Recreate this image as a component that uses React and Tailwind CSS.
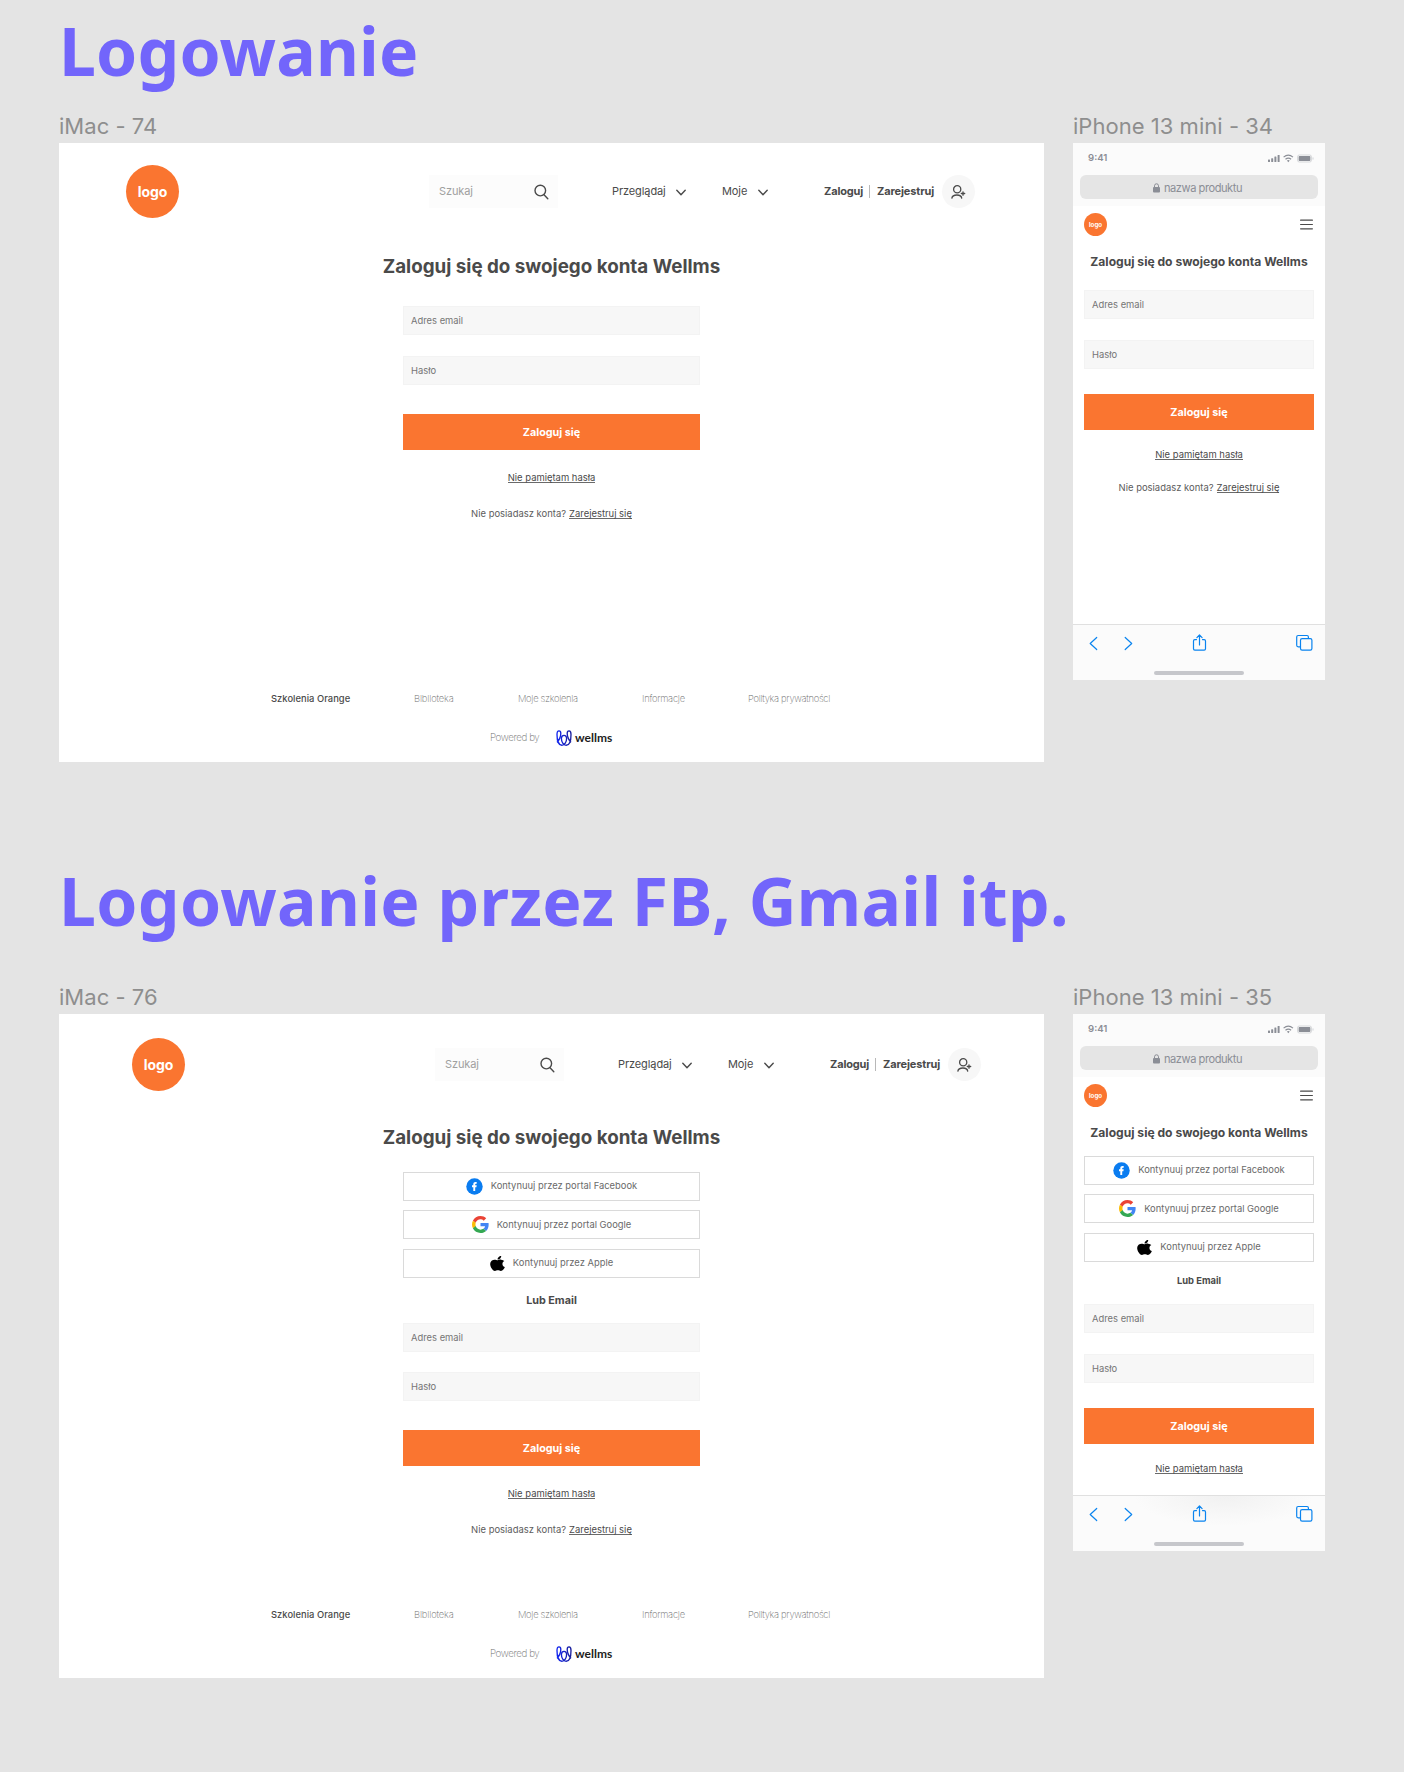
import React from "react";

const inter = "font-['Inter',sans-serif]";

function SearchIcon() {
  return (
    <svg width="15" height="16" viewBox="0 0 15 16" fill="none" stroke="#4a4a4a" strokeWidth="1.4" strokeLinecap="round">
      <circle cx="6.3" cy="6.6" r="5.3" />
      <path d="M10 10.7 L13.8 14.8" />
    </svg>
  );
}

function Chevron() {
  return (
    <svg width="11" height="7" viewBox="0 0 11 7" fill="none" stroke="#4a4a4a" strokeWidth="1.4" strokeLinecap="round" strokeLinejoin="round" className="relative top-px">
      <path d="M.8 1.2 L5 5.7 L9.2 1.2" />
    </svg>
  );
}

function UserPlus() {
  return (
    <svg width="15" height="14" viewBox="0 0 15 14" fill="none" stroke="#4a4a4a" strokeWidth="1.3" strokeLinecap="round">
      <circle cx="6.2" cy="4.3" r="3.6" />
      <path d="M.9 13.2 C1.2 11 2.9 10 5.9 10 C8.9 10 10.4 11 10.7 13.2" />
      <path d="M12 6.8 V10.2 M10.3 8.5 H13.7" />
    </svg>
  );
}

function WellmsMark() {
  return (
    <svg width="16" height="16" viewBox="0 0 16 16" fill="none" strokeWidth="1.35">
      <defs>
        <linearGradient id="wellms" x1="0" x2="1" y1="0" y2="0">
          <stop offset="0" stopColor="#1226f0" />
          <stop offset="1" stopColor="#1a1f9c" />
        </linearGradient>
      </defs>
      <path
        stroke="url(#wellms)"
        d="M0.9 12.2 C2.8 11 4.8 6.8 4.8 3.4 C4.8 1.6 4.1 0.8 3 0.8 C1.6 0.8 1 2.2 1 4.4 C1 9.6 2.4 15.2 5.8 15.2 C8.6 15.2 10.6 12 10.6 8.6 C10.6 6.6 9.6 5.4 8 5.4 C6.4 5.4 5.4 6.6 5.4 8.6 C5.4 12 7.4 15.2 10.2 15.2 C13.6 15.2 15 9.6 15 4.4 C15 2.2 14.4 0.8 13 0.8 C11.9 0.8 11.2 1.6 11.2 3.4 C11.2 6.8 13.2 11 15.1 12.2"
      />
    </svg>
  );
}

function FacebookIcon() {
  return (
    <svg width="17" height="17" viewBox="0 0 17 17">
      <circle cx="8.5" cy="8.5" r="8.2" fill="#0a7cf0" />
      <path d="M7.3 13 V9.2 H6 V7.3 H7.3 V6.2 C7.3 4.6 8.1 3.9 9.5 3.9 C10.1 3.9 10.5 4 10.7 4 V5.7 H10 C9.4 5.7 9.2 6 9.2 6.5 V7.3 H10.7 L10.4 9.2 H9.2 V13 Z" fill="#fff" />
    </svg>
  );
}

function GoogleIcon() {
  return (
    <svg width="17" height="17" viewBox="0 0 48 48">
      <path fill="#ea4335" d="M24 9.5c3.54 0 6.71 1.22 9.21 3.6l6.85-6.85C35.9 2.38 30.47 0 24 0 14.62 0 6.51 5.38 2.56 13.22l7.98 6.19C12.43 13.72 17.74 9.5 24 9.5z" />
      <path fill="#4285f4" d="M46.98 24.55c0-1.57-.15-3.09-.38-4.55H24v9.02h12.94c-.58 2.96-2.26 5.48-4.78 7.18l7.73 6c4.51-4.18 7.09-10.36 7.09-17.65z" />
      <path fill="#fbbc05" d="M10.53 28.59c-.48-1.45-.76-2.99-.76-4.59s.27-3.14.76-4.59l-7.98-6.19C.92 16.46 0 20.12 0 24c0 3.88.92 7.54 2.56 10.78l7.97-6.19z" />
      <path fill="#34a853" d="M24 48c6.48 0 11.93-2.13 15.89-5.81l-7.73-6c-2.15 1.45-4.92 2.3-8.16 2.3-6.26 0-11.57-4.22-13.47-9.91l-7.98 6.19C6.51 42.62 14.62 48 24 48z" />
    </svg>
  );
}

function AppleIcon() {
  return (
    <svg width="15" height="17" viewBox="0 0 384 512" preserveAspectRatio="none" fill="#000">
      <path d="M318.7 268.7c-.2-36.7 16.4-64.4 50-84.8-18.8-26.9-47.2-41.7-84.7-44.6-35.5-2.8-74.3 20.7-88.5 20.7-15 0-49.4-19.7-76.4-19.7C63.3 141.2 4 184.8 4 273.5q0 39.3 14.4 81.2c12.8 36.7 59 126.7 107.2 125.2 25.2-.6 43-17.9 75.8-17.9 31.8 0 48.3 17.9 76.4 17.9 48.6-.7 90.4-82.5 102.6-119.3-65.2-30.7-61.7-90-61.7-91.9zm-56.6-164.2c27.3-32.4 24.8-61.9 24-72.5-24.1 1.4-52 16.4-67.9 34.9-17.5 19.8-27.8 44.3-25.6 71.9 26.1 2 49.9-11.4 69.5-34.3z" />
    </svg>
  );
}

function DesktopHeader({ className }) {
  return (
    <header className={`flex h-[53px] items-center text-[#4a4a4a] ${className}`}>
      <div className="flex size-[53px] shrink-0 items-center justify-center rounded-full bg-[#fa7530] text-[14px] font-bold tracking-[-0.1px] text-white">logo</div>
      <div className="ml-[250px] flex h-[33px] w-[129px] shrink-0 items-center justify-between bg-[#fcfcfc] pr-[9px] pl-[10px] text-[11px] tracking-[-0.1px] text-[#a0a0a0]">
        Szukaj
        <SearchIcon />
      </div>
      <div className="ml-[54px] flex w-[110px] shrink-0 items-center justify-between pr-[35px] text-[11px] whitespace-nowrap">
        <span className="w-[64px] shrink-0 tracking-[-0.1px]">Przeglądaj</span>
        <Chevron />
      </div>
      <div className="flex w-[102px] shrink-0 items-center text-[11px]">
        <span className="w-[36px] shrink-0 tracking-[-0.1px]">Moje</span>
        <Chevron />
      </div>
      <div className="flex items-center text-[11px] font-bold whitespace-nowrap">
        <span className="w-[45px] shrink-0 tracking-[-0.15px]">Zaloguj</span>
        <span className="h-[13px] w-px shrink-0 bg-[#b8b8b8]" />
        <span className="ml-[7px] w-[65px] shrink-0 tracking-[-0.12px]">Zarejestruj</span>
      </div>
      <div className="flex size-[33px] shrink-0 items-center justify-center rounded-full bg-[#f7f7f7]">
        <UserPlus />
      </div>
    </header>
  );
}

function Field({ label, className }) {
  return (
    <div className={`flex h-[29px] w-full items-center border border-[#f3f3f3] bg-[#f7f7f7] pt-[2px] pl-[7px] text-[9.4px] text-[#757575] ${className}`}>{label}</div>
  );
}

function Submit({ className }) {
  return (
    <button className={`flex h-[36px] w-full items-center justify-center bg-[#fa7530] pt-[2px] text-[10.8px] font-bold text-white ${className}`}>Zaloguj się</button>
  );
}

function Social({ icon, label, className }) {
  return (
    <button className={`flex h-[29px] w-full items-center justify-center gap-[8px] border border-[#dadada] bg-white text-[9.4px] text-[#6a6a6a] ${className}`}>
      {icon}
      <span>{label}</span>
    </button>
  );
}

function Socials({ className }) {
  return (
    <div className={`flex w-full flex-col gap-[9.4px] ${className}`}>
      <Social icon={<FacebookIcon />} label="Kontynuuj przez portal Facebook" />
      <Social icon={<GoogleIcon />} label="Kontynuuj przez portal Google" />
      <Social icon={<AppleIcon />} label="Kontynuuj przez Apple" />
    </div>
  );
}

const linkStyle = "inline-block h-[11px] border-b border-[#6a6a6a] leading-[12px] text-[#4a4a4a]";

function Forgot({ className }) {
  return (
    <div className={`flex h-[12px] justify-center text-[9.45px] ${className}`}>
      <a className={linkStyle}>Nie pamiętam hasła</a>
    </div>
  );
}

function Register({ className }) {
  return (
    <div className={`flex h-[12px] justify-center gap-[3px] text-[9.45px] leading-[12px] text-[#5c5c5c] ${className}`}>
      <span>Nie posiadasz konta?</span>
      <a className={linkStyle}>Zarejestruj się</a>
    </div>
  );
}

function DesktopFooter({ className }) {
  return (
    <footer className={`text-[#6e6e6e] ${className}`}>
      <nav className="flex h-[14px] items-center pl-[212px] text-[9.4px] font-extralight tracking-[-0.3px] whitespace-nowrap">
        <span className="w-[143px] font-medium tracking-[0.03px] text-[#4a4a4a]">Szkolenia Orange</span>
        <span className="w-[104px] tracking-[-0.15px]">Biblioteka</span>
        <span className="w-[124px]">Moje szkolenia</span>
        <span className="w-[106px] tracking-[-0.25px]">Informacje</span>
        <span>Polityka prywatności</span>
      </nav>
      <div className="mt-[24px] flex h-[16px] items-center pl-[431px] text-[9.8px] font-extralight tracking-[-0.4px]">
        <span className="w-[66px] pt-px">Powered by</span>
        <WellmsMark />
        <span className="ml-[3px] font-['Lato',sans-serif] text-[12px] font-bold tracking-[0px] text-[#1d1d1d]">wellms</span>
      </div>
    </footer>
  );
}

function PhoneTop() {
  return (
    <>
      <div className="h-[63px] bg-[#fbfbfb] px-[7px] pt-[8px]">
        <div className="flex h-[14px] items-center justify-between pr-[4px] pl-[8px]">
          <span className="text-[9.6px] font-semibold text-[#8b8e96]">9:41</span>
          <svg width="46" height="9" viewBox="0 0 46 9" fill="#8b8e96">
            <rect x="0" y="5.4" width="2" height="2.6" rx=".5" />
            <rect x="3.2" y="4.2" width="2" height="3.8" rx=".5" />
            <rect x="6.4" y="2.6" width="2" height="5.4" rx=".5" />
            <rect x="9.6" y="1" width="2" height="7" rx=".5" />
            <g fill="none" stroke="#8b8e96" strokeWidth="1.2">
              <path d="M15.6 3.1 Q20.3 -0.7 25 3.1" />
              <path d="M17.5 5.2 Q20.3 2.9 23.1 5.2" />
            </g>
            <path d="M18.9 6.6 Q20.3 5.5 21.7 6.6 L20.3 8.2 Z" />
            <rect x="29.5" y="1" width="14" height="7" rx="1.8" fill="none" stroke="#c9cbcf" strokeWidth=".7" />
            <rect x="30.6" y="2" width="11.8" height="5" rx=".8" />
            <rect x="44.6" y="3.4" width=".8" height="2.2" fill="#c9cbcf" />
          </svg>
        </div>
        <div className="mt-[10px] flex h-[24px] items-center justify-center gap-[4px] rounded-[6px] bg-[#e5e5e5] pt-[3px] pr-[3px] text-[11.1px] tracking-[-0.45px] text-[#8b8e96]">
          <svg width="7" height="10" viewBox="0 0 7 10" className="relative -top-px">
            <rect x="0" y="4" width="7" height="5.5" rx="1" fill="#8b8e96" />
            <path d="M1.5 4.5 V2.8 Q1.5 .8 3.5 .8 Q5.5 .8 5.5 2.8 V4.5" fill="none" stroke="#8b8e96" strokeWidth="1" />
          </svg>
          <span>nazwa produktu</span>
        </div>
      </div>
      <div className="mt-[7px] flex h-[23px] items-center justify-between pr-[12px] pl-[11px]">
        <div className="flex size-[23px] items-center justify-center rounded-full bg-[#fa7530] text-[6.2px] font-bold text-white">logo</div>
        <svg width="13" height="11" viewBox="0 0 13 11" stroke="#4a4a4a" strokeWidth="1.2" strokeLinecap="round">
          <path d="M.6 1.2 H12.4 M.6 5.5 H12.4 M.6 9.8 H12.4" />
        </svg>
      </div>
      <h2 className="mt-[17px] h-[18px] text-center text-[12.1px] leading-[18px] font-bold whitespace-nowrap text-[#4a4a4a]">Zaloguj się do swojego konta Wellms</h2>
    </>
  );
}

function PhoneToolbar({ tinted }) {
  return (
    <div className={`mt-auto flex h-[56px] flex-col border-t border-[#e0e0e0] bg-[#fbfbfb] ${tinted ? "bg-[radial-gradient(ellipse_90px_30px_at_60%_0,#f1f1f1,#fbfbfb)]" : ""}`}>
      <svg width="252" height="38" viewBox="0 0 252 38" fill="none" stroke="#0a84ef" strokeWidth="1.2" strokeLinecap="round" strokeLinejoin="round">
        <path d="M23.7 12.5 L17.2 18.5 L23.7 24.5" />
        <path d="M52.2 12.5 L58.7 18.5 L52.2 24.5" />
        <path d="M123.5 14.6 H121.8 Q120.5 14.6 120.5 15.9 V23.8 Q120.5 25.1 121.8 25.1 H131.2 Q132.5 25.1 132.5 23.8 V15.9 Q132.5 14.6 131.2 14.6 H129.5 M126.5 20 V10.3 M123.9 12.6 L126.5 10 L129.1 12.6" />
        <rect x="227.5" y="13.6" width="11.4" height="11.6" rx="1.6" />
        <path d="M227.3 21.8 H225.2 Q223.7 21.8 223.7 20.3 V12 Q223.7 10.5 225.2 10.5 H234 Q235.4 10.5 235.4 12 V13.4" />
      </svg>
      <div className="mt-[8px] ml-[81px] h-[4px] w-[90px] rounded-full bg-[#c6c7cb]" />
    </div>
  );
}

function FrameLabel({ children, className }) {
  return <div className={`h-[27px] text-[22px] leading-[27px] tracking-[0.03px] whitespace-nowrap text-[#8e8e8e] ${className}`}>{children}</div>;
}

export default function App() {
  return (
    <main className={`h-[1772px] w-[1404px] overflow-hidden bg-[#e4e4e4] pl-[59px] ${inter}`}>
      <section className="h-[871px] pt-[6px]">
        <h1 className="h-[92px] font-['Noto_Sans',sans-serif] text-[66px] leading-[88px] font-bold tracking-[0.2px] whitespace-nowrap text-[#7265fb]">Logowanie</h1>
        <div className="mt-[15px] flex gap-[29px]">
          <div>
            <FrameLabel>iMac - 74</FrameLabel>
            <div className="mt-[3px] flex h-[619px] w-[985px] flex-col bg-white">
              <DesktopHeader className="mt-[22px] ml-[67px]" />
              <h2 className="mt-[35px] h-[28px] text-center text-[18.8px] leading-[28px] font-bold text-[#4a4a4a]">Zaloguj się do swojego konta Wellms</h2>
              <div className="mx-auto mt-[25px] w-[297px]">
                <Field label="Adres email" />
                <Field label="Hasło" className="mt-[21px]" />
                <Submit className="mt-[29px]" />
                <Forgot className="mt-[22px]" />
                <Register className="mt-[24px]" />
              </div>
              <DesktopFooter className="mt-[172px]" />
            </div>
          </div>
          <div>
            <FrameLabel>iPhone 13 mini - 34</FrameLabel>
            <div className="mt-[3px] flex h-[537px] w-[252px] flex-col bg-white">
              <PhoneTop />
              <div className="mx-[11px] mt-[19px]">
                <Field label="Adres email" />
                <Field label="Hasło" className="mt-[21px]" />
                <Submit className="mt-[25px]" />
                <Forgot className="mt-[19px]" />
                <Register className="mt-[21px]" />
              </div>
              <PhoneToolbar />
            </div>
          </div>
        </div>
      </section>
      <section>
        <h1 className="mt-[-15px] h-[92px] font-['Noto_Sans',sans-serif] text-[66px] leading-[88px] font-bold tracking-[0.35px] whitespace-nowrap text-[#7265fb]">Logowanie przez FB, Gmail itp.</h1>
        <div className="mt-[36px] flex gap-[29px]">
          <div>
            <FrameLabel>iMac - 76</FrameLabel>
            <div className="mt-[3px] flex h-[664px] w-[985px] flex-col bg-white">
              <DesktopHeader className="mt-[24px] ml-[73px]" />
              <h2 className="mt-[33px] h-[28px] text-center text-[18.8px] leading-[28px] font-bold text-[#4a4a4a]">Zaloguj się do swojego konta Wellms</h2>
              <div className="mx-auto mt-[20px] w-[297px]">
                <Socials />
                <div className="mt-[15px] h-[16px] text-center text-[10.8px] leading-[16px] font-bold text-[#4a4a4a]">Lub Email</div>
                <Field label="Adres email" className="mt-[14px]" />
                <Field label="Hasło" className="mt-[20px]" />
                <Submit className="mt-[29px]" />
                <Forgot className="mt-[22px]" />
                <Register className="mt-[24px]" />
              </div>
              <DesktopFooter className="mt-[72px]" />
            </div>
          </div>
          <div>
            <FrameLabel>iPhone 13 mini - 35</FrameLabel>
            <div className="mt-[3px] flex h-[537px] w-[252px] flex-col bg-white">
              <PhoneTop />
              <div className="mx-[11px] mt-[14px]">
                <Socials />
                <div className="mt-[12px] h-[14px] text-center text-[9.4px] leading-[14px] font-bold text-[#4a4a4a]">Lub Email</div>
                <Field label="Adres email" className="mt-[16px]" />
                <Field label="Hasło" className="mt-[21px]" />
                <Submit className="mt-[25px]" />
                <Forgot className="mt-[19px]" />
              </div>
              <PhoneToolbar tinted />
            </div>
          </div>
        </div>
      </section>
    </main>
  );
}
